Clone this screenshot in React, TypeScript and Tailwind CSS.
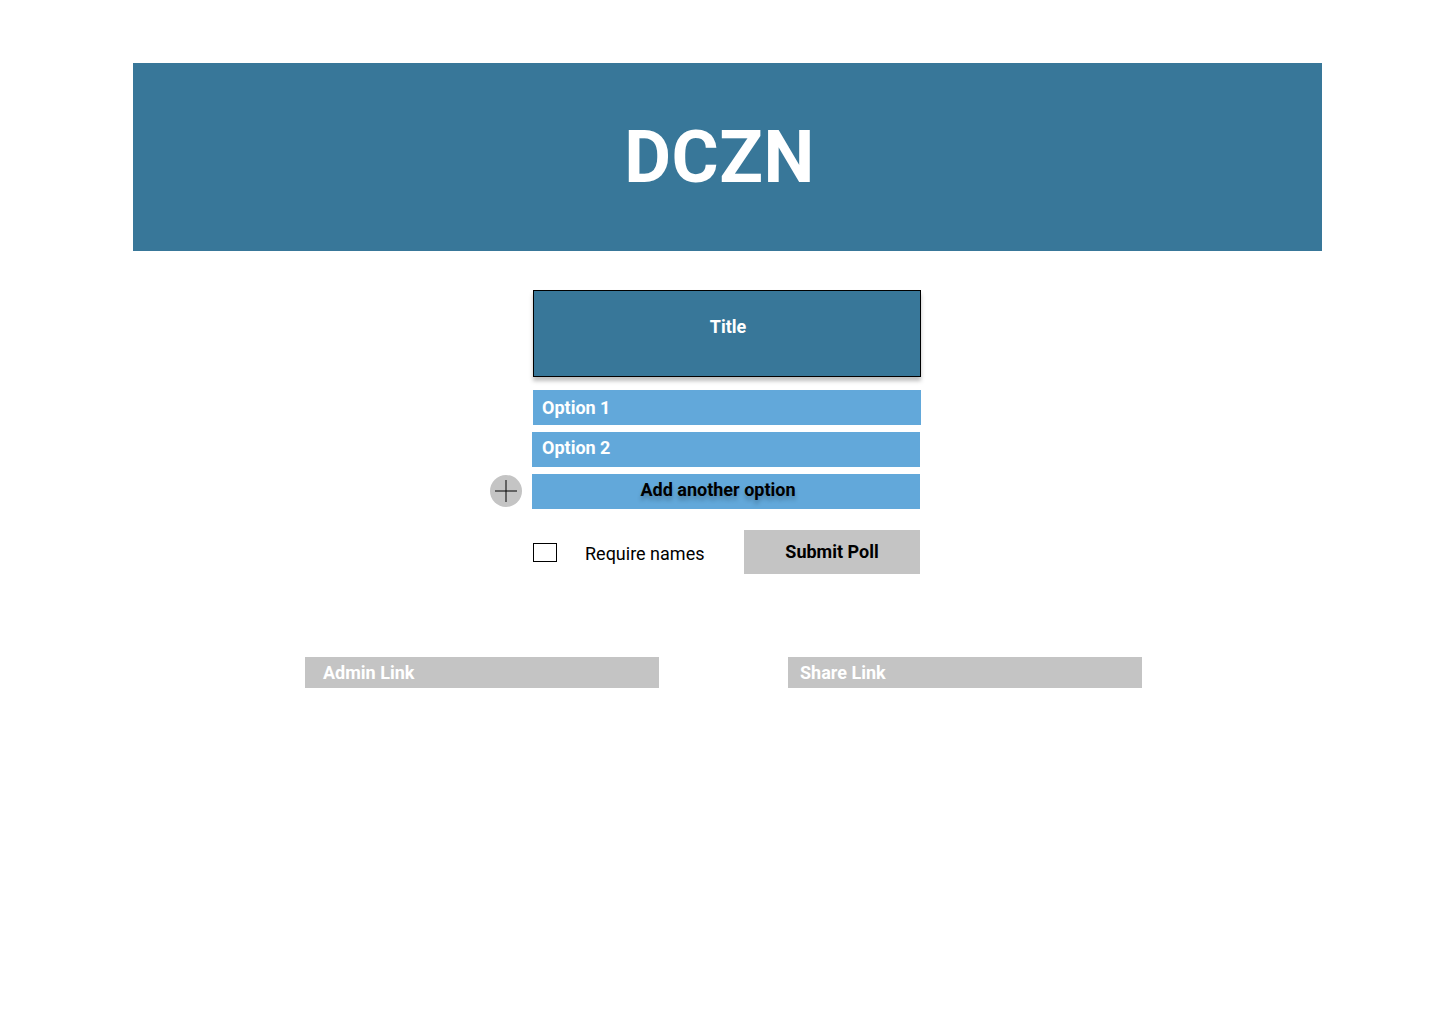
import React from "react";

export default function App() {
  return (
    <div className="min-h-[1024px] w-[1440px] bg-white font-['Roboto',sans-serif] pt-[63px]">
      <header className="ml-[133px] w-[1189px] h-[188px] bg-[#387799] flex items-center justify-center pr-[16px]">
        <h1 className="text-white font-bold text-[72px] leading-none tracking-[0.5px] mt-[2px]">DCZN</h1>
      </header>

      <div className="ml-[532px] w-[389px] mt-[39px] flex flex-col">
        <div className="ml-[1px] w-[388px] h-[87px] bg-[#387799] border border-black shadow-[0_4px_4px_rgba(0,0,0,0.25)] flex justify-center pt-[24px] pl-[2px]">
          <span className="text-white font-bold text-[18px] leading-[24px]">Title</span>
        </div>
        <div className="ml-[1px] mt-[13px] w-[388px] h-[35px] bg-[#62a8da] flex items-center pl-[9px]">
          <span className="text-white font-bold text-[18px] leading-none">Option 1</span>
        </div>
        <div className="mt-[7px] w-[388px] h-[35px] bg-[#62a8da] flex items-center pl-[10px] pb-[4px]">
          <span className="text-white font-bold text-[18px] leading-none">Option 2</span>
        </div>
        <div className="relative mt-[7px] w-[388px] h-[35px] bg-[#62a8da] flex items-center justify-center pr-[16px] pb-[3px]">
          <div className="absolute left-[-42px] top-[1px] w-[32px] h-[32px] rounded-full bg-[#c4c4c4] flex items-center justify-center">
            <svg width="22" height="22" viewBox="0 0 22 22">
              <line x1="11" y1="0" x2="11" y2="22" stroke="black" strokeWidth="1" />
              <line x1="0" y1="11" x2="22" y2="11" stroke="black" strokeWidth="1" />
            </svg>
          </div>
          <span className="text-black font-bold text-[18px] leading-none [text-shadow:0_4px_4px_rgba(0,0,0,0.25)]">Add another option</span>
        </div>
        <div className="mt-[21px] flex items-center h-[44px] w-[388px]">
          <div className="ml-[1px] w-[24px] h-[19px] border border-black mt-[1px]" />
          <span className="ml-[28px] text-black text-[18px] leading-none mt-[3px]">Require names</span>
          <button className="ml-auto w-[176px] h-[44px] bg-[#c4c4c4] flex items-center justify-center">
            <span className="text-black font-bold text-[18px] leading-none">Submit Poll</span>
          </button>
        </div>
      </div>

      <div className="mt-[83px] ml-[305px] flex gap-[129px]">
        <div className="w-[354px] h-[31px] bg-[#c4c4c4] flex items-center pl-[18px]">
          <span className="text-white font-bold text-[18px] leading-none">Admin Link</span>
        </div>
        <div className="w-[354px] h-[31px] bg-[#c4c4c4] flex items-center pl-[12px]">
          <span className="text-white font-bold text-[18px] leading-none">Share Link</span>
        </div>
      </div>
    </div>
  );
}
